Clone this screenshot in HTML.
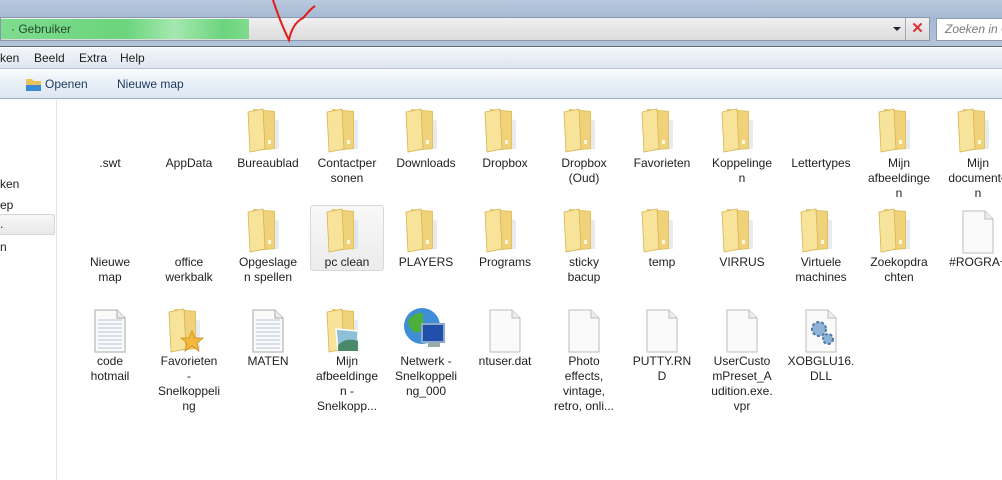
<!DOCTYPE html>
<html><head><meta charset="utf-8"><style>
*{margin:0;padding:0;box-sizing:border-box}
body{width:1002px;height:480px;overflow:hidden;background:#fff;font-family:"Liberation Sans",sans-serif;font-size:12px;color:#1e1e1e;position:relative}
.top{position:absolute;left:0;top:0;width:1002px;height:47px;background:linear-gradient(#b9c9de,#a6b9d3 40%,#b3c4da);border-bottom:1px solid #5d6b80}
.addr{position:absolute;left:0;top:17px;width:930px;height:24px;background:linear-gradient(#f0f0f0,#dcdcdc);border:1px solid #8796ab}
.green{position:absolute;left:0;top:1px;width:248px;height:20px;background:linear-gradient(90deg,#7edc8e,#6bd47c 50%,#a5e8b0 70%,#6bd47c 90%,#7fdc8f)}
.addr .t{position:absolute;left:10px;top:4px;color:#244a2c}
.xbtn{position:absolute;left:904px;top:0;width:24px;height:22px;border-left:1px solid #a0a8b4;color:#d33;font-size:15px;text-align:center;line-height:21px;font-weight:bold}
.dd{position:absolute;left:892px;top:9px;width:0;height:0;border-left:4px solid transparent;border-right:4px solid transparent;border-top:4px solid #223}
.search{position:absolute;left:936px;top:18px;width:70px;height:23px;background:#fff;border:1px solid #8d9bb0;color:#7a7a7a;font-style:italic;padding:3px 0 0 8px;white-space:nowrap;overflow:hidden}
.menu{position:absolute;left:0;top:48px;width:1002px;height:21px;background:linear-gradient(#f3f6fb,#dfe6f1);border-bottom:1px solid #b6c1d1}
.menu span{position:absolute;top:3px}
.tool{position:absolute;left:0;top:69px;width:1002px;height:30px;background:linear-gradient(#fafcfe,#e8eff8 50%,#dde7f3);border-bottom:1px solid #a0aec2}
.tool span{position:absolute;top:8px;color:#1e395b}
.side{position:absolute;left:0;top:100px;width:57px;height:380px;border-right:1px solid #dde5ee;background:#fff}
.side span{position:absolute;left:0}
.sel{position:absolute;left:-2px;top:114px;width:57px;height:21px;border:1px solid #d6d6d6;border-radius:2px;background:linear-gradient(#f7f7f7,#e9e9e9)}
.it{position:absolute;width:78px;text-align:center;line-height:15px}
.ic{position:absolute}
.pcsel{position:absolute;left:310px;top:205px;width:74px;height:66px;border:1px solid #d9d9d9;border-radius:3px;background:linear-gradient(#f8f8f8,#ececec)}
</style></head><body>
<svg width="0" height="0" style="position:absolute">
<defs>
<symbol id="f" viewBox="0 0 34 46">
<path d="M8 2 L30 4 L30 42 L8 44 Z" fill="#e2c260"/>
<path d="M9 3 L29 5 L29 41 L9 43 Z" fill="#efd27a"/>
<path d="M3 5 L18 2 L20 42 L5 45 Z" fill="#f7e49a" stroke="#d6b350" stroke-width=".8"/>
<path d="M23 33 h3 v4 h-3z" fill="#fff8dc"/>
<path d="M30 12 L34 14 L34 42 L30 42Z" fill="#cfd6de" opacity=".5"/>
</symbol>
<symbol id="d" viewBox="0 0 34 44">
<path d="M2 1 H24 L32 9 V43 H2 Z" fill="#fafafa" stroke="#bcbcbc"/>
<path d="M24 1 V9 H32" fill="#eee" stroke="#bcbcbc"/>
</symbol>
<symbol id="td" viewBox="0 0 34 44">
<path d="M2 1 H24 L32 9 V43 H2 Z" fill="#fafafa" stroke="#a8a8a8"/>
<path d="M24 1 V9 H32" fill="#eee" stroke="#a8a8a8"/>
<g stroke="#b8c4d6"><path d="M5 11H29M5 15H29M5 19H29M5 23H29M5 27H29M5 31H29M5 35H29M5 39H29"/></g>
</symbol>
</defs></svg>

<div class="top">
<div class="addr"><div class="green"></div><span class="t">· Gebruiker</span><div class="dd"></div><div class="xbtn">✕</div></div>
<div class="search">Zoeken in G</div>
<svg style="position:absolute;left:265px;top:0" width="60" height="45"><path d="M8 0 C12 12 18 28 24 40 C26 30 30 22 38 18 C42 14 44 10 50 6" stroke="#e21b1b" stroke-width="2" fill="none"/></svg>
</div>
<div class="menu"><span style="left:0">ken</span><span style="left:34px">Beeld</span><span style="left:79px">Extra</span><span style="left:120px">Help</span></div>
<div class="tool">
<svg style="position:absolute;left:25px;top:8px" width="17" height="15"><path d="M1 2h6l2 2h7v10H1z" fill="#e8c35b"/><path d="M1 8h15v6H1z" fill="#3a8ad8"/></svg>
<span style="left:45px">Openen</span><span style="left:117px">Nieuwe map</span></div>
<div class="side"><span style="top:77px">ken</span><span style="top:98px">ep</span><div class="sel"></div><span style="top:117px">.</span><span style="top:140px">n</span></div>
<div class="pcsel"></div>

<svg class="ic" style="left:245px;top:107px" width="34" height="46"><use href="#f"/></svg>
<svg class="ic" style="left:324px;top:107px" width="34" height="46"><use href="#f"/></svg>
<svg class="ic" style="left:403px;top:107px" width="34" height="46"><use href="#f"/></svg>
<svg class="ic" style="left:482px;top:107px" width="34" height="46"><use href="#f"/></svg>
<svg class="ic" style="left:561px;top:107px" width="34" height="46"><use href="#f"/></svg>
<svg class="ic" style="left:639px;top:107px" width="34" height="46"><use href="#f"/></svg>
<svg class="ic" style="left:719px;top:107px" width="34" height="46"><use href="#f"/></svg>
<svg class="ic" style="left:876px;top:107px" width="34" height="46"><use href="#f"/></svg>
<svg class="ic" style="left:955px;top:107px" width="34" height="46"><use href="#f"/></svg>

<svg class="ic" style="left:245px;top:207px" width="34" height="46"><use href="#f"/></svg>
<svg class="ic" style="left:324px;top:207px" width="34" height="46"><use href="#f"/></svg>
<svg class="ic" style="left:403px;top:207px" width="34" height="46"><use href="#f"/></svg>
<svg class="ic" style="left:482px;top:207px" width="34" height="46"><use href="#f"/></svg>
<svg class="ic" style="left:561px;top:207px" width="34" height="46"><use href="#f"/></svg>
<svg class="ic" style="left:639px;top:207px" width="34" height="46"><use href="#f"/></svg>
<svg class="ic" style="left:719px;top:207px" width="34" height="46"><use href="#f"/></svg>
<svg class="ic" style="left:798px;top:207px" width="34" height="46"><use href="#f"/></svg>
<svg class="ic" style="left:876px;top:207px" width="34" height="46"><use href="#f"/></svg>
<svg class="ic" style="left:961px;top:210px" width="34" height="44"><use href="#d"/></svg>

<svg class="ic" style="left:93px;top:309px" width="34" height="44"><use href="#td"/></svg>
<svg class="ic" style="left:166px;top:307px" width="44" height="46"><use href="#f" width="34" height="46"/><path d="M26 24 L29 31 L37 31 L31 36 L33 44 L26 39 L19 44 L21 36 L15 31 L23 31Z" fill="#f2b93a" stroke="#c98a1a" stroke-width=".8"/></svg>
<svg class="ic" style="left:251px;top:309px" width="34" height="44"><use href="#td"/></svg>
<svg class="ic" style="left:324px;top:307px" width="40" height="46"><use href="#f" width="34" height="46"/><path d="M12 22 L34 24 L34 44 L14 44Z" fill="#8fc0d8" stroke="#fff" stroke-width="1.5"/><path d="M14 38 Q22 30 34 34 V44 H14Z" fill="#4a8a6a"/></svg>
<svg class="ic" style="left:402px;top:306px" width="46" height="46"><circle cx="20" cy="20" r="18" fill="#3d8ed6"/><path d="M6 14 Q14 4 22 8 Q18 16 26 18 Q20 28 12 26 Q6 22 6 14Z" fill="#4cae3c"/><rect x="20" y="18" width="22" height="18" fill="#1f4fa8" stroke="#8ea9c8" stroke-width="2"/><rect x="26" y="37" width="12" height="4" fill="#9aa"/></svg>
<svg class="ic" style="left:488px;top:309px" width="34" height="44"><use href="#d"/></svg>
<svg class="ic" style="left:567px;top:309px" width="34" height="44"><use href="#d"/></svg>
<svg class="ic" style="left:645px;top:309px" width="34" height="44"><use href="#d"/></svg>
<svg class="ic" style="left:725px;top:309px" width="34" height="44"><use href="#d"/></svg>
<svg class="ic" style="left:804px;top:309px" width="34" height="44"><use href="#d"/><circle cx="15" cy="20" r="7" fill="#8fb3d6" stroke="#4b7aa8" stroke-width="2" stroke-dasharray="3 2"/><circle cx="24" cy="30" r="5" fill="#8fb3d6" stroke="#4b7aa8" stroke-width="2" stroke-dasharray="3 2"/></svg>

<div class="it" style="left:71px;top:156px">.swt</div>
<div class="it" style="left:150px;top:156px">AppData</div>
<div class="it" style="left:229px;top:156px">Bureaublad</div>
<div class="it" style="left:308px;top:156px">Contactper<br>sonen</div>
<div class="it" style="left:387px;top:156px">Downloads</div>
<div class="it" style="left:466px;top:156px">Dropbox</div>
<div class="it" style="left:545px;top:156px">Dropbox<br>(Oud)</div>
<div class="it" style="left:623px;top:156px">Favorieten</div>
<div class="it" style="left:703px;top:156px">Koppelinge<br>n</div>
<div class="it" style="left:782px;top:156px">Lettertypes</div>
<div class="it" style="left:860px;top:156px">Mijn<br>afbeeldinge<br>n</div>
<div class="it" style="left:939px;top:156px">Mijn<br>documente<br>n</div>
<div class="it" style="left:71px;top:255px">Nieuwe<br>map</div>
<div class="it" style="left:150px;top:255px">office<br>werkbalk</div>
<div class="it" style="left:229px;top:255px">Opgeslage<br>n spellen</div>
<div class="it" style="left:308px;top:255px">pc clean</div>
<div class="it" style="left:387px;top:255px">PLAYERS</div>
<div class="it" style="left:466px;top:255px">Programs</div>
<div class="it" style="left:545px;top:255px">sticky<br>bacup</div>
<div class="it" style="left:623px;top:255px">temp</div>
<div class="it" style="left:703px;top:255px">VIRRUS</div>
<div class="it" style="left:782px;top:255px">Virtuele<br>machines</div>
<div class="it" style="left:860px;top:255px">Zoekopdra<br>chten</div>
<div class="it" style="left:939px;top:255px">#ROGRA~</div>
<div class="it" style="left:71px;top:354px">code<br>hotmail</div>
<div class="it" style="left:150px;top:354px">Favorieten<br>-<br>Snelkoppeli<br>ng</div>
<div class="it" style="left:229px;top:354px">MATEN</div>
<div class="it" style="left:308px;top:354px">Mijn<br>afbeeldinge<br>n -<br>Snelkopp...</div>
<div class="it" style="left:387px;top:354px">Netwerk -<br>Snelkoppeli<br>ng_000</div>
<div class="it" style="left:466px;top:354px">ntuser.dat</div>
<div class="it" style="left:545px;top:354px">Photo<br>effects,<br>vintage,<br>retro, onli...</div>
<div class="it" style="left:623px;top:354px">PUTTY.RN<br>D</div>
<div class="it" style="left:703px;top:354px">UserCusto<br>mPreset_A<br>udition.exe.<br>vpr</div>
<div class="it" style="left:782px;top:354px">XOBGLU16.<br>DLL</div>
</body></html>
